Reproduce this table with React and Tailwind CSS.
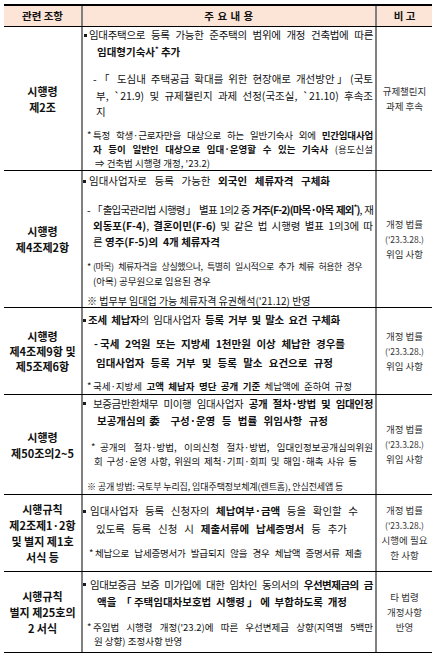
import clsx from 'clsx'

// one line of a cell; j = stretch the line to its right edge, as in the source document
function L({ j, className, children }) {
  return (
    <div className={clsx(j ? '[text-align-last:justify]' : 'whitespace-nowrap', className)}>
      {children}
    </div>
  )
}

function Sq({ className }) {
  return <span className={clsx('block size-[3px] shrink-0 bg-[#1a1a1a]', className)} />
}

function Star() {
  return <span className="align-super text-[7px] leading-none">*</span>
}

function Row({ h, left, right, leftClass = 'leading-[16px]', children }) {
  return (
    <div className={clsx('grid grid-cols-[77px_294px_57px] border-b border-black', h)}>
      <div className={clsx('flex flex-col items-center justify-center text-[11px] font-bold', leftClass)}>
        {left.map((t) => (
          <div key={t} className="whitespace-nowrap">{t}</div>
        ))}
      </div>
      <div className="border-l-2 border-[#808080]">{children}</div>
      <div className="flex flex-col items-center justify-center border-l-2 border-[#808080] text-[9.5px] leading-[15px] text-[#333]">
        {right.map((t) => (
          <div key={t} className={clsx('whitespace-nowrap', t.startsWith('(') && 'text-[8.5px]')}>{t}</div>
        ))}
      </div>
    </div>
  )
}

export default function App() {
  return (
    <div className="min-h-screen bg-white pt-[4px] font-['Noto_Sans_CJK_KR',sans-serif] text-[#111]">
      <div className="mx-auto w-[428px] border-t-2 border-black">

        {/* header */}
        <div className="grid h-[21px] grid-cols-[77px_294px_57px] border-b border-black bg-[#fce4d6] text-[10.5px] font-bold">
          <div className="flex items-center justify-center">관련 조항</div>
          <div className="flex items-center justify-center border-l-2 border-[#808080] tracking-[0.5px]">주 요 내 용</div>
          <div className="flex items-center justify-center border-l-2 border-[#808080]">비 고</div>
        </div>

        {/* 제2조 */}
        <Row h="h-[144px]" left={['시행령', '제2조']} right={['규제챌린지', '과제 후속']}>
          <div className="text-[10.5px] leading-[16.5px]">
            <div className="flex items-center pl-[1px] pr-[2px]">
              <Sq className="mr-[2px]" />
              <L j className="flex-1 tracking-[-0.3px]">임대주택으로 등록 가능한 준주택의 범위에 개정 건축법에 따른</L>
            </div>
            <L className="pl-[14px] font-bold">임대형기숙사<Star /> 추가</L>
          </div>
          <div className="mt-[11px] text-[10.5px] leading-[16.5px]">
            <div className="flex pl-[10px] pr-[2px]">
              <span className="w-[6px] shrink-0">-</span>
              <L j className="flex-1">「 도심내 주택공급 확대를 위한 현장애로 개선방안」(국토</L>
            </div>
            <L j className="pl-[13px] pr-[2px]">부, `21.9) 및 규제챌린지 과제 선정(국조실, `21.10) 후속조</L>
            <L className="pl-[13px]">지</L>
          </div>
          <div className="mt-[7px] text-[9.5px] leading-[14px]">
            <div className="flex pl-[4px] pr-[2px]">
              <span className="w-[6px] shrink-0">*</span>
              <L j className="flex-1 tracking-[-0.2px]">특정 학생·근로자만을 대상으로 하는 일반기숙사 외에 <b>민간임대사업</b></L>
            </div>
            <L j className="pl-[10px] pr-[2px]"><b>자 등이 일반인 대상으로 임대·운영할 수 있는 기숙사</b> (용도신설</L>
            <L className="pl-[12px]">⇒ 건축법 시행령 개정, '23.2)</L>
          </div>
        </Row>

        {/* 제4조제2항 */}
        <Row h="h-[137px]" left={['시행령', '제4조제2항']} right={['개정 법률', "('23.3.28.)", '위임 사항']}>
          <div className="pt-[2px] text-[10.5px] leading-[16px]">
            <div className="flex items-center pr-[45px]">
              <Sq className="mr-[3px]" />
              <L j className="flex-1">임대사업자로 등록 가능한 <b>외국인 체류자격 구체화</b></L>
            </div>
          </div>
          <div className="mt-[13px] text-[10.5px] leading-[16px]">
            <div className="flex pl-[4px] pr-[2px]">
              <span className="w-[5px] shrink-0">-</span>
              <L j className="flex-1 tracking-[-0.85px]">
                「출입국관리법 시행령」 별표 1의2 중 <b>거주(F-2)(마목·아목 제외<Star />)</b>, 재
              </L>
            </div>
            <L j className="pl-[10px] pr-[2px]"><b>외동포(F-4)</b>, <b>결혼이민(F-6)</b> 및 같은 법 시행령 별표 1의3에 따</L>
            <L className="pl-[10px]">른 <b>영주(F-5)의&nbsp; 4개 체류자격</b></L>
          </div>
          <div className="mt-[9px] leading-[15px]">
            <div className="flex pl-[4px] pr-[13px] text-[9px]">
              <span className="w-[6px] shrink-0">*</span>
              <L j className="flex-1 tracking-[-0.5px]">(마목) 체류자격을 상실했으나, 특별히 일시적으로 추가 체류 허용한 경우</L>
            </div>
            <L className="pl-[10px] text-[9.5px]">(아목) 공무원으로 임용된 경우</L>
          </div>
          <L className="mt-[6px] pl-[4px] text-[10px] leading-[12px]">※ 법무부 임대업 가능 체류자격 유권해석('21.12) 반영</L>
        </Row>

        {/* 제4조제9항 및 제5조제6항 */}
        <Row
          h="h-[87px]"
          left={['시행령', '제4조제9항 및', '제5조제6항']}
          leftClass="leading-[15px]"
          right={['개정 법률', "('23.3.28.)", '위임 사항']}
        >
          <div className="pt-[4px] text-[10.5px] leading-[16px]">
            <div className="flex items-center pr-[35px]">
              <Sq className="mr-[2px]" />
              <L j className="flex-1 tracking-[-0.2px]"><b>조세 체납자</b>의 임대사업자 <b>등록 거부 및 말소 요건 구체화</b></L>
            </div>
          </div>
          <div className="mt-[6px] text-[10.5px] font-bold leading-[19px]">
            <div className="flex pl-[11px] pr-[30px]">
              <span className="w-[6px] shrink-0">-</span>
              <L j className="flex-1">국세 2억원 또는 지방세 1천만원 이상 체납한 경우를</L>
            </div>
            <L j className="pl-[13px] pr-[42px]">임대사업자 등록 거부 및 등록 말소 요건으로 규정</L>
          </div>
          <div className="mt-[7px] flex pl-[4px] pr-[23px] text-[9.5px] leading-[14px]">
            <span className="w-[6px] shrink-0">*</span>
            <L j className="flex-1">국세·지방세 <b>고액 체납자 명단 공개 기준</b> 체납액에 준하여 규정</L>
          </div>
        </Row>

        {/* 제50조의2~5 */}
        <Row h="h-[100px]" left={['시행령', '제50조의2~5']} right={['개정 법률', "('23.3.28.)", '위임 사항']}>
          <div className="text-[10.5px] leading-[17px]">
            <div className="flex items-center pr-[2px]">
              <Sq className="mr-[7px]" />
              <L j className="flex-1 tracking-[-0.35px]">보증금반환채무 미이행 임대사업자 <b>공개 절차·방법 및 임대인정</b></L>
            </div>
            <L j className="pl-[14px] pr-[47px] font-bold">보공개심의委 구성·운영 등 법률 위임사항 규정</L>
          </div>
          <div className="mt-[11px] text-[9.5px] leading-[14px]">
            <div className="flex pl-[8px] pr-[2px]">
              <span className="w-[9px] shrink-0">*</span>
              <L j className="flex-1">공개의 절차·방법, 이의신청 절차·방법, 임대인정보공개심의위원</L>
            </div>
            <L j className="pl-[11px] pr-[18px]">회 구성·운영 사항, 위원의 제척·기피·회피 및 해임·해촉 사유 등</L>
          </div>
          <L className="mt-[12px] pl-[4px] text-[9px] leading-[14px] tracking-[-0.1px]">
            ※ 공개 방법: 국토부 누리집, 임대주택정보체계(렌트홈), 안심전세앱 등
          </L>
        </Row>

        {/* 시행규칙 제2조 */}
        <Row
          h="h-[77px]"
          left={['시행규칙', '제2조제1·2항', '및 별지 제1호', '서식 등']}
          right={['개정 법률', "('23.3.28.)", '시행에 필요', '한 사항']}
        >
          <div className="pt-[7px] text-[10.5px] leading-[18px]">
            <div className="flex items-center pr-[17px]">
              <Sq className="mr-[4px]" />
              <L j className="flex-1">임대사업자 등록 신청자의 <b>체납여부·금액</b> 등을 확인할 수</L>
            </div>
            <L j className="pl-[13px] pr-[28px]">있도록 등록 신청 시 <b>제출서류에 납세증명서</b> 등 추가</L>
          </div>
          <div className="mt-[8px] flex pl-[6px] pr-[13px] text-[9.5px] leading-[14px]">
            <span className="w-[6px] shrink-0">*</span>
            <L j className="flex-1 tracking-[-0.2px]">체납으로 납세증명서가 발급되지 않을 경우 체납액 증명서류 제출</L>
          </div>
        </Row>

        {/* 별지 제25호의2 */}
        <Row h="h-[81px]" left={['시행규칙', '별지 제25호의', '2 서식']} right={['타 법령', '개정사항', '반영']}>
          <div className="pt-[4px] text-[10.5px] leading-[17px]">
            <div className="flex items-center pr-[2px]">
              <Sq className="mr-[4px]" />
              <L j className="flex-1 tracking-[-0.5px]">임대보증금 보증 미가입에 대한 임차인 동의서의 <b>우선변제금의 금</b></L>
            </div>
            <L j className="pl-[14px] pr-[28px] font-bold">액을 「주택임대차보호법 시행령」에 부합하도록 개정</L>
          </div>
          <div className="mt-[10px] text-[9.5px] leading-[14px]">
            <div className="flex pl-[4px] pr-[2px]">
              <span className="w-[6px] shrink-0">*</span>
              <L j className="flex-1">주임법 시행령 개정('23.2)에 따른 우선변제금 상향(지역별 5백만</L>
            </div>
            <L className="pl-[11px]">원 상향) 조정사항 반영</L>
          </div>
        </Row>

      </div>
    </div>
  )
}
